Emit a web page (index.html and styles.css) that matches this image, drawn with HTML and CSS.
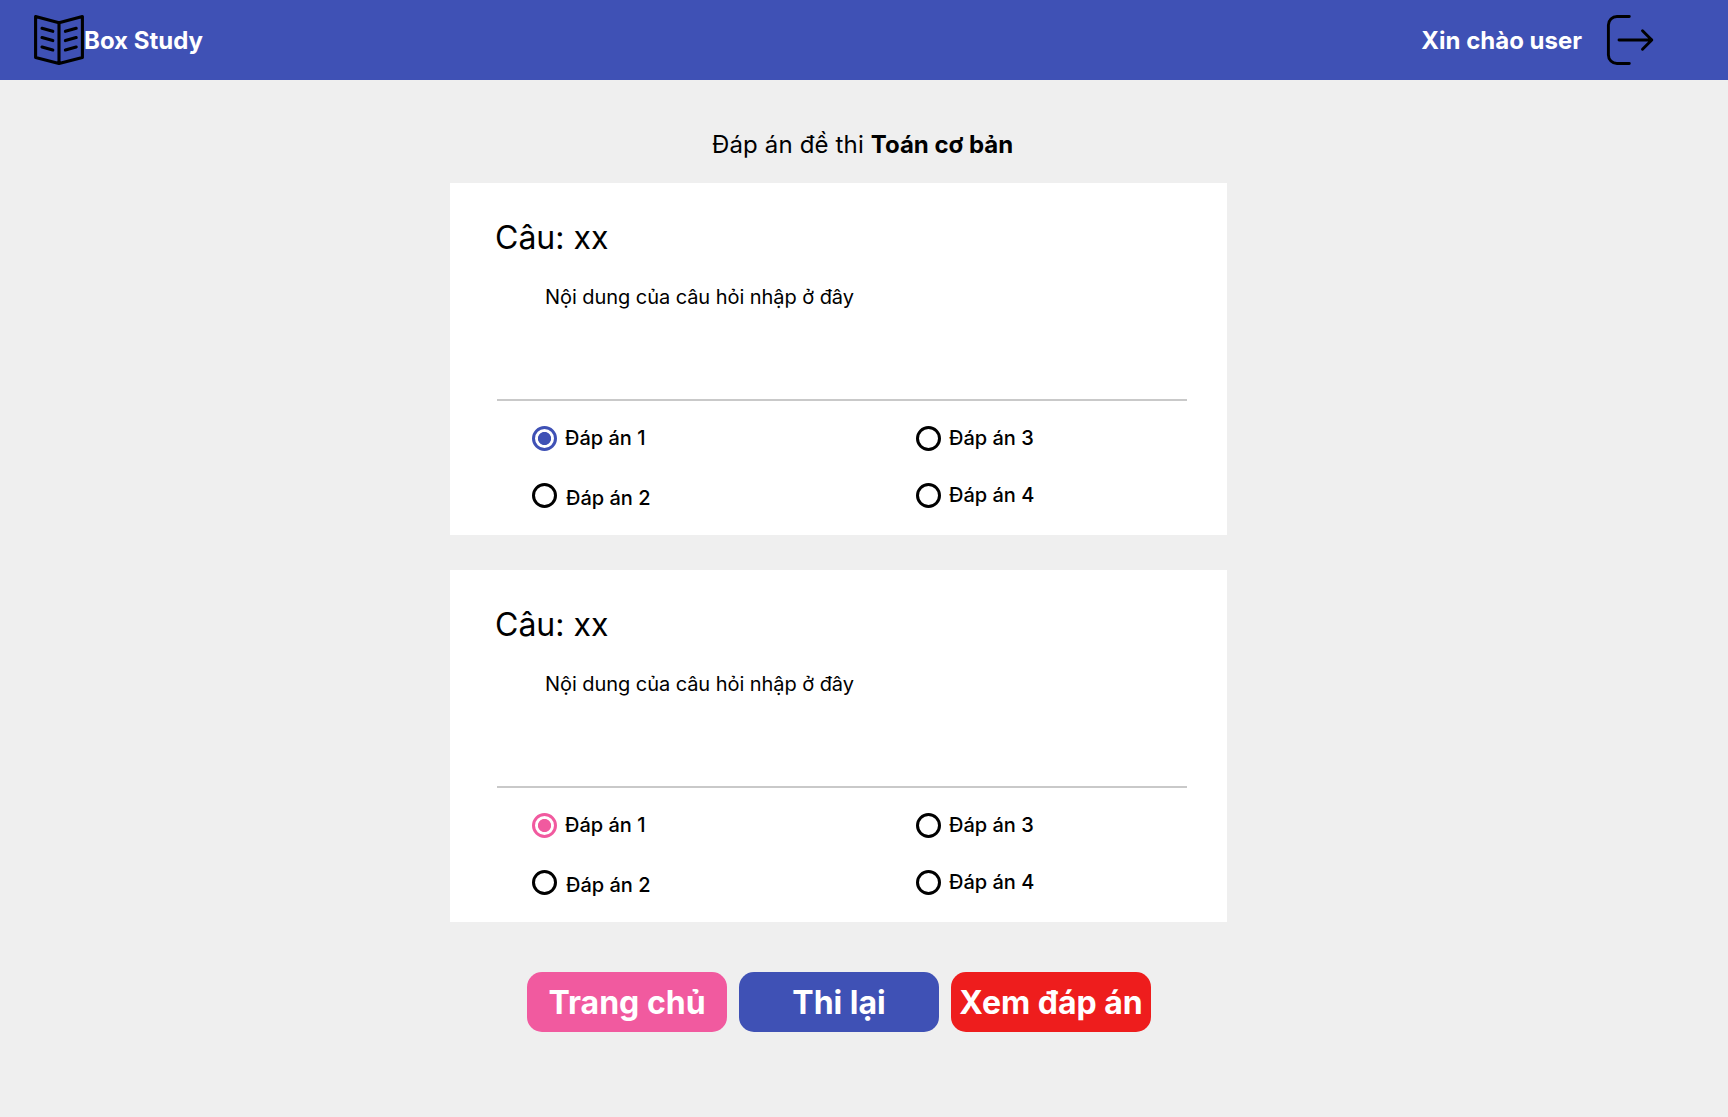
FILE: index.html
```html
<!DOCTYPE html>
<html lang="vi">
<head>
<meta charset="utf-8">
<title>Box Study</title>
<link rel="stylesheet" href="styles.css">
</head>
<body>
<header class="header">
  <a class="brand">
    <svg class="brand-icon" width="50" height="50" viewBox="0 0 50 50" fill="none" stroke="#000" stroke-width="3.1" stroke-linecap="round" stroke-linejoin="round">
      <path d="M25 7.800 1.600 1.600V42.500L25 48.400 48.400 42.500V1.600L25 7.800V48.400"/>
      <path d="M8 13.300 18.800 16.300M8 22.600 18.800 25.600M8 32 18.800 35M42.200 13.300 31.400 16.300M42.200 22.600 31.400 25.600M42.200 32 31.400 35"/>
    </svg>
    <span>Box Study</span>
  </a>
  <div class="account">
    <span>Xin chào user</span>
    <svg class="logout" width="50" height="50" viewBox="0 0 50 50" fill="none" stroke="#000" stroke-width="2.900" stroke-linecap="round" stroke-linejoin="round">
      <path d="M23.300 1.500H11A8.600 8.600 0 0 0 2.400 10.100V39.900A8.600 8.600 0 0 0 11 48.500H23.300"/>
      <path d="M13 25H45.800M36.500 15.700 45.800 25 36.500 34.300"/>
    </svg>
  </div>
</header>
<main class="main">
  <h1 class="title">Đáp án đề thi <b>Toán cơ bản</b></h1>
  <section class="card">
    <h2 class="number">Câu: xx</h2>
    <p class="question">Nội dung của câu hỏi nhập ở đây</p>
    <div class="answers">
      <div class="answer"><i class="radio blue"></i><span>Đáp án 1</span></div>
      <div class="answer"><i class="radio"></i><span>Đáp án 3</span></div>
      <div class="answer lowered"><i class="radio"></i><span>Đáp án 2</span></div>
      <div class="answer"><i class="radio"></i><span>Đáp án 4</span></div>
    </div>
  </section>
  <section class="card">
    <h2 class="number">Câu: xx</h2>
    <p class="question">Nội dung của câu hỏi nhập ở đây</p>
    <div class="answers">
      <div class="answer"><i class="radio pink"></i><span>Đáp án 1</span></div>
      <div class="answer"><i class="radio"></i><span>Đáp án 3</span></div>
      <div class="answer lowered"><i class="radio"></i><span>Đáp án 2</span></div>
      <div class="answer"><i class="radio"></i><span>Đáp án 4</span></div>
    </div>
  </section>
  <nav class="actions">
    <button class="button home">Trang chủ</button>
    <button class="button retry">Thi lại</button>
    <button class="button review">Xem đáp án</button>
  </nav>
</main>
</body>
</html>
```
FILE: styles.css
```css
* { box-sizing: border-box; }
body {
  margin: 0;
  min-height: 100vh;
  background: #efefef;
  color: #000;
  font-family: Inter, "Liberation Sans", sans-serif;
}
.header {
  display: flex;
  justify-content: space-between;
  align-items: center;
  height: 80px;
  padding: 0 72px 0 34px;
  background: #3f51b5;
  color: #fff;
  font-size: 24px;
  font-weight: 700;
  line-height: 29px;
}
.brand, .account { display: flex; align-items: center; }
.account { gap: 24px; }
.main {
  width: 777px;
  margin-left: 450px;
  padding-top: 50px;
}
.title {
  margin: 0 0 24px;
  padding-left: 262px;
  font-size: 24px;
  font-weight: 400;
  line-height: 29px;
  letter-spacing: 0.15px;
  white-space: nowrap;
}
.title b { font-weight: 700; letter-spacing: 0; }
.card {
  height: 352px;
  padding: 35px 40px 0 45px;
  margin-bottom: 35px;
  background: #fff;
}
.number {
  margin: 0 0 28px;
  font-size: 32px;
  font-weight: 400;
  line-height: 39px;
}
.question {
  height: 116px;
  margin: 0 0 0 2px;
  padding: 0 0 0 48px;
  border-bottom: 2px solid #c9c9c9;
  font-size: 20px;
  line-height: 24px;
  letter-spacing: -0.06px;
}
.answers {
  display: grid;
  grid-template-columns: 384px 1fr;
  row-gap: 32px;
  padding: 25px 0 0 37px;
}
.answer {
  display: flex;
  gap: 8px;
  height: 25px;
  font-size: 20px;
  font-weight: 500;
  line-height: 24px;
}
.lowered { gap: 9px; }
.lowered span { padding-top: 3px; }
.radio {
  flex: none;
  width: 25px;
  height: 25px;
  border: 3px solid #000;
  border-radius: 50%;
}
.blue { border-color: #3f51b5; background: radial-gradient(circle, #3f51b5 6.2px, transparent 6.9px); }
.pink { border-color: #f15a9f; background: radial-gradient(circle, #f15a9f 6.2px, transparent 6.9px); }
.actions {
  display: flex;
  gap: 12px;
  padding: 15px 0 0 77px;
}
.button {
  width: 200px;
  height: 60px;
  padding: 0;
  border: 0;
  border-radius: 15px;
  color: #fff;
  font: 700 32px/39px Inter, "Liberation Sans", sans-serif;
  white-space: nowrap;
}
.home { background: #f15a9f; }
.retry { background: #3f51b5; }
.review { background: #ee1d1d; }
```
